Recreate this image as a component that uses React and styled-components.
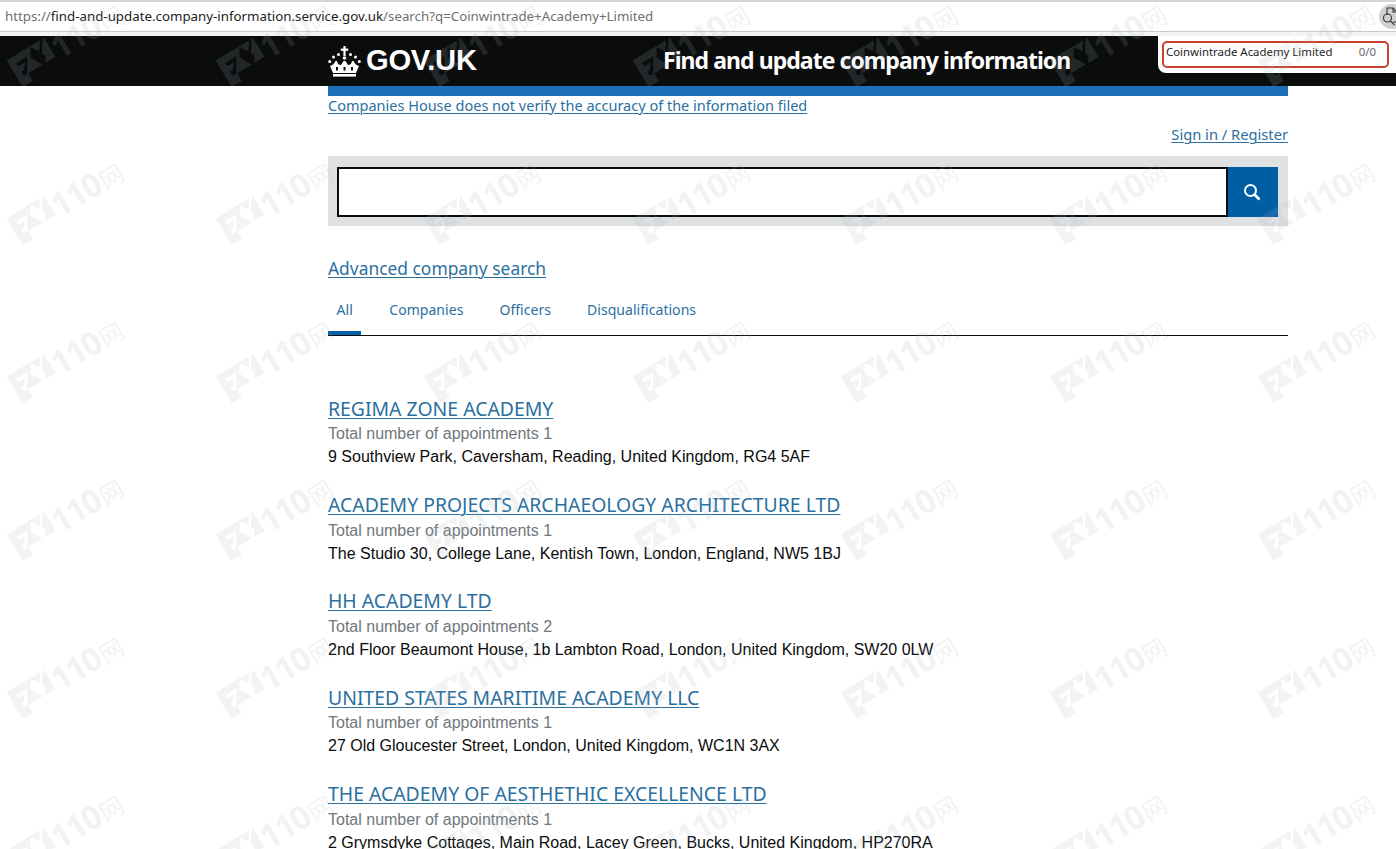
import React from "react";
import styled, { createGlobalStyle } from "styled-components";

const Global = createGlobalStyle`
  html, body { margin: 0; padding: 0; background: #fff; }
  body { font-family: "Liberation Sans", Arial, sans-serif; overflow: hidden; height: 849px; }
`;
const Page = styled.div`position: relative; width: 1396px; height: 849px; overflow: hidden; background: #fff;`;
const AddressBar = styled.div`
  height: 32px; box-sizing: border-box; border-top: 2px solid #d4d4d4; border-bottom: 1px solid #c9c9c9;
  display: flex; align-items: center; justify-content: space-between; padding-left: 5px;
  font: 13.3px/1 "Noto Sans", "Open Sans", sans-serif; color: #6f6f6f;
  b { font-weight: 400; color: #1c1c1c; }
`;
const ZoomBadge = styled.div`
  width: 26px; height: 25px; margin-right: -9px; border-radius: 50%; background: #d0d0d0; display: flex; align-items: center; padding-left: 3px; box-sizing: border-box;
`;
const Chrome = styled.div`height: 4px; background: #f4f4f4;`;
const Header = styled.header`height: 50px; background: #0b0c0c; padding-left: 328px;`;
const HeaderInner = styled.div`width: 960px; height: 50px; display: flex; align-items: center; color: #fff;`;
const Logo = styled.div`width: 335px; display: flex; align-items: center; gap: 5px; font: 700 29.2px/1 "Liberation Sans", Arial, sans-serif; letter-spacing: -0.3px;`;
const ServiceName = styled.div`font: 700 23px/1 "Noto Sans", sans-serif; letter-spacing: -0.95px; margin-top: -2px;`;
const Main = styled.main`width: 960px; margin-left: 328px;`;
const BlueBar = styled.div`height: 10px; background: #1d70b8;`;
const Link = styled.a`
  color: #2b6f9f; text-decoration: underline; font-family: "Noto Sans", sans-serif;
  font-size: ${p => p.$size || 14.5}px; line-height: 1; text-decoration-thickness: 1px;
  text-underline-offset: 2px;
`;
const Notice = styled.div`height: 20px; box-sizing: border-box; padding-bottom: 2px; display: flex; align-items: center;`;
const SignRow = styled.div`height: 40px; box-sizing: border-box; padding-bottom: 3px; display: flex; align-items: center; justify-content: flex-end;`;
const SearchPanel = styled.div`height: 70px; background: #dee0e2; padding: 11px 10px 9px 9px; box-sizing: border-box; display: flex;`;
const SearchInput = styled.div`flex: 1; height: 50px; box-sizing: border-box; border: 2px solid #0b0c0c; background: #fff;`;
const SearchButton = styled.div`width: 50px; height: 50px; background: #005ea5; padding-right: 2px; box-sizing: border-box; display: flex; align-items: center; justify-content: center;`;
const AdvancedRow = styled.div`height: 30px; margin-top: 27px; padding-top: 2px; box-sizing: border-box; display: flex; align-items: center;`;
const Tabs = styled.nav`height: 49px; margin-top: 3px; border-bottom: 1px solid #0b0c0c; display: flex; gap: 36px;`;
const Tab = styled.div`
  height: 49px; box-sizing: border-box; padding: 14px 0 0; color: #2b6f9f;
  font: 14px/20px "Noto Sans", sans-serif; letter-spacing: 0.04px;
  ${p => p.$active && `
    padding: 14px 8.5px 0; margin-right: -8px; border-bottom: 4px solid #005ea5;
  `}
`;
const Results = styled.div`margin-top: 61.3px;`;
const Result = styled.article`height: 96.35px;`;
const Title = styled.div`height: 24px; padding-bottom: 2px; box-sizing: border-box; display: flex; align-items: center;`;
const Meta = styled.div`font: 16px/23px "Liberation Sans", Arial, sans-serif; color: #6f777b; margin-top: 1px;`;
const Address = styled.div`font: 16px/23px "Liberation Sans", Arial, sans-serif; color: #0b0c0c;`;
const FindBar = styled.div`
  position: absolute; top: 36px; right: 0; width: 238px; height: 37px; box-sizing: border-box; background: #fff;
  border-radius: 0 0 0 8px; padding: 5px 7px 4px 4px;
`;
const FindField = styled.div`
  height: 27px; box-sizing: border-box; border: 2px solid #c8412f; border-radius: 5px; display: flex; align-items: center; justify-content: space-between;
  padding: 0 11px 5px 2px; font: 11.4px/1 "Noto Sans", sans-serif; color: #222;
  span { color: #666; }
`;
const Watermarks = styled.div`
  position: absolute; left: -38px; top: -38px; pointer-events: none;
  display: grid; grid-template-columns: repeat(7, 208.5px); grid-auto-rows: 158px;
`;
const Mark = styled.div`
  display: flex; align-items: center; justify-content: center; gap: 1px; transform: rotate(-31deg);
  color: rgba(165,180,195,0.16); font: 700 33px/1 "Noto Sans", "Noto Sans CJK SC", sans-serif; letter-spacing: -1.5px;
  small { font-size: 24px; font-weight: 400; margin-left: 2px; }
`;

const Crown = () => (
  <svg width="33" height="31" viewBox="0 0 33 31" fill="#fff">
    <rect x="15.4" y="0" width="2.2" height="10" />
    <rect x="12.8" y="2.6" width="7.4" height="2.2" />
    <circle cx="16.5" cy="12" r="1.8" />
    <circle cx="10.5" cy="8.5" r="1.5" /><circle cx="22.5" cy="8.5" r="1.5" />
    <circle cx="5.5" cy="11" r="1.5" /><circle cx="27.5" cy="11" r="1.5" />
    <circle cx="1.7" cy="15.5" r="1.5" /><circle cx="31.3" cy="15.5" r="1.5" />
    <path d="M2 20 C5 19 6 18 7.5 15 L9 15 C9.5 18 11 19 13 19 L15.5 15 H17.5 L20 19 C22 19 23.5 18 24 15 L25.5 15 C27 18 28 19 31 20 L28 27 H5Z" />
    <rect x="5" y="28" width="23" height="2.6" />
    <path d="M8 21h2v3.5H8z M15.5 21h2v3.5h-2z M23 21h2v3.5h-2z" fill="#0b0c0c" />
  </svg>
);
const Glass = () => (
  <svg width="18" height="18" viewBox="0 0 18 18" fill="none" stroke="#fff" strokeWidth="2">
    <circle cx="7.5" cy="7.5" r="5.5" /><path d="M11.5 11.5 L16.5 16.5" strokeWidth="2.6" />
  </svg>
);
const PageSearch = () => (
  <svg width="18" height="22" viewBox="0 0 18 22" fill="none" stroke="#333" strokeWidth="1.1">
    <path d="M5 9V2h6l4 4v10h-4" /><path d="M11 2v4h4" /><circle cx="5.5" cy="12" r="4" /><path d="M8.5 15l4 4" />
  </svg>
);
const FxLogo = () => (
  <svg width="44" height="36" viewBox="0 0 44 36" fill="currentColor" fillRule="evenodd">
    <path d="M0 4H28L22 14L29 26H12V35H0Z M7 11V15H15L10 21H7V26H11L20 11Z" />
    <path d="M27 4H39L33 13Z M34 16L42 4H44V26H32L36 20Z" />
  </svg>
);

const results = [
  ["REGIMA ZONE ACADEMY", "1", "9 Southview Park, Caversham, Reading, United Kingdom, RG4 5AF"],
  ["ACADEMY PROJECTS ARCHAEOLOGY ARCHITECTURE LTD", "1", "The Studio 30, College Lane, Kentish Town, London, England, NW5 1BJ"],
  ["HH ACADEMY LTD", "2", "2nd Floor Beaumont House, 1b Lambton Road, London, United Kingdom, SW20 0LW"],
  ["UNITED STATES MARITIME ACADEMY LLC", "1", "27 Old Gloucester Street, London, United Kingdom, WC1N 3AX"],
  ["THE ACADEMY OF AESTHETHIC EXCELLENCE LTD", "1", "2 Grymsdyke Cottages, Main Road, Lacey Green, Bucks, United Kingdom, HP270RA"],
];

export default function App() {
  return (
    <Page>
      <Global />
      <AddressBar>
        <div>https://<b>find-and-update.company-information.service.gov.uk</b>/search?q=Coinwintrade+Academy+Limited</div>
        <ZoomBadge><PageSearch /></ZoomBadge>
      </AddressBar>
      <Chrome />
      <Header>
        <HeaderInner>
          <Logo><Crown />GOV.UK</Logo>
          <ServiceName>Find and update company information</ServiceName>
        </HeaderInner>
      </Header>
      <Main>
        <BlueBar />
        <Notice><Link>Companies House does not verify the accuracy of the information filed</Link></Notice>
        <SignRow><Link $size={14.7}>Sign in / Register</Link></SignRow>
        <SearchPanel>
          <SearchInput />
          <SearchButton><Glass /></SearchButton>
        </SearchPanel>
        <AdvancedRow><Link $size={17.4}>Advanced company search</Link></AdvancedRow>
        <Tabs>
          <Tab $active>All</Tab>
          <Tab>Companies</Tab>
          <Tab>Officers</Tab>
          <Tab>Disqualifications</Tab>
        </Tabs>
        <Results>
          {results.map(([name, count, addr]) => (
            <Result key={name}>
              <Title><Link $size={19.4}>{name}</Link></Title>
              <Meta>Total number of appointments {count}</Meta>
              <Address>{addr}</Address>
            </Result>
          ))}
        </Results>
      </Main>
      <FindBar>
        <FindField>Coinwintrade Academy Limited<span>0/0</span></FindField>
      </FindBar>
      <Watermarks>
        {Array.from({ length: 42 }, (_, i) => (
          <Mark key={i}><FxLogo /><div>110<small>网</small></div></Mark>
        ))}
      </Watermarks>
    </Page>
  );
}
